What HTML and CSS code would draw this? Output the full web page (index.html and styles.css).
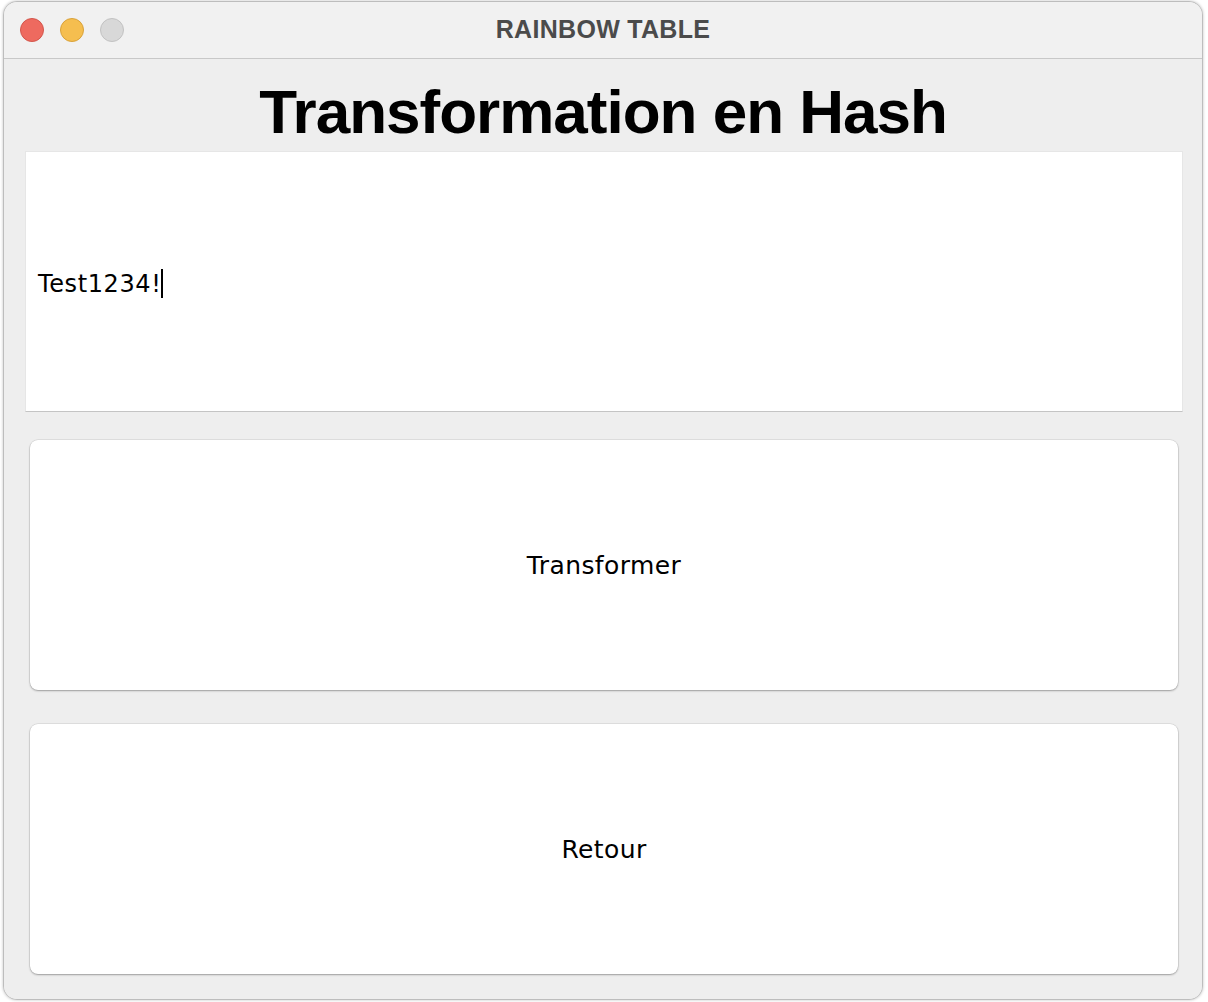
FILE: index.html
```html
<!DOCTYPE html>
<html lang="fr">
<head>
<meta charset="utf-8">
<title>RAINBOW TABLE</title>
<link rel="stylesheet" href="styles.css">
</head>
<body>
<div class="window">
  <div class="titlebar">
    <div class="lights">
      <span class="light red"></span>
      <span class="light yellow"></span>
      <span class="light gray"></span>
    </div>
    <div class="title">RAINBOW TABLE</div>
  </div>
  <div class="content">
    <h1 class="heading">Transformation en Hash</h1>
    <div class="field"><span class="value">Test1234!</span><span class="caret"></span></div>
    <div class="btn btn-first">Transformer</div>
    <div class="btn btn-second">Retour</div>
  </div>
</div>
</body>
</html>
```
FILE: styles.css
```css
html, body {
  margin: 0;
  padding: 0;
  background: #ffffff;
}
body {
  width: 1208px;
  height: 1002px;
  overflow: hidden;
}
.window {
  margin: 1px 0 0 3px;
  width: 1200px;
  height: 999px;
  box-sizing: border-box;
  border: 1px solid #bdbdbd;
  border-radius: 14px;
  overflow: hidden;
  background: #eeeeee;
  display: flex;
  flex-direction: column;
  box-shadow: 0 0 3px rgba(0,0,0,0.25);
}
.titlebar {
  position: relative;
  height: 57px;
  flex: none;
  box-sizing: border-box;
  background: #f1f1f1;
  border-bottom: 1px solid #c8c8c8;
  display: flex;
  align-items: center;
  justify-content: center;
}
.lights {
  position: absolute;
  left: 16px;
  top: 16px;
  display: flex;
  gap: 16px;
}
.light {
  width: 24px;
  height: 24px;
  border-radius: 50%;
  box-sizing: border-box;
}
.red { background: #ee6a5f; border: 1px solid #d3564c; }
.yellow { background: #f5be4f; border: 1px solid #d9a23a; }
.gray { background: #d8d8d8; border: 1px solid #c2c2c2; }
.title {
  font-family: "Liberation Sans", Arial, sans-serif;
  font-weight: bold;
  font-size: 25px;
  color: #4b4b4b;
  margin-top: -2px;
  letter-spacing: 0.3px;
}
.content {
  flex: 1;
  display: flex;
  flex-direction: column;
  background: #eeeeee;
}
.heading {
  margin: 0;
  padding: 21px 0 7px;
  height: 64px;
  line-height: 64px;
  text-align: center;
  font-family: "Liberation Sans", Arial, sans-serif;
  font-weight: bold;
  font-size: 62px;
  letter-spacing: -1px;
  color: #000000;
}
.field {
  margin: 0 19px 0 21px;
  height: 261px;
  box-sizing: border-box;
  background: #ffffff;
  border: 1px solid #e6e6e6;
  border-bottom-color: #c4c4c4;
  display: flex;
  align-items: center;
  padding-left: 12px;
  padding-top: 4px;
}
.value {
  font-family: "DejaVu Sans", "Liberation Sans", sans-serif;
  font-size: 24px;
  letter-spacing: 0.6px;
  color: #000000;
}
.caret {
  width: 2px;
  height: 29px;
  background: #000000;
  margin-left: 0;
}
.btn {
  margin: 0 24px 0 26px;
  height: 250px;
  flex: none;
  background: #ffffff;
  border-radius: 8px;
  box-shadow: 0 0 0 0.5px rgba(0,0,0,0.12), 0 1px 2px rgba(0,0,0,0.3);
  display: flex;
  align-items: center;
  justify-content: center;
  font-family: "DejaVu Sans", "Liberation Sans", sans-serif;
  font-size: 25px;
  letter-spacing: 0.4px;
  color: #000000;
}
.btn-first { margin-top: 28px; }
.btn-second { margin-top: 34px; }
```
